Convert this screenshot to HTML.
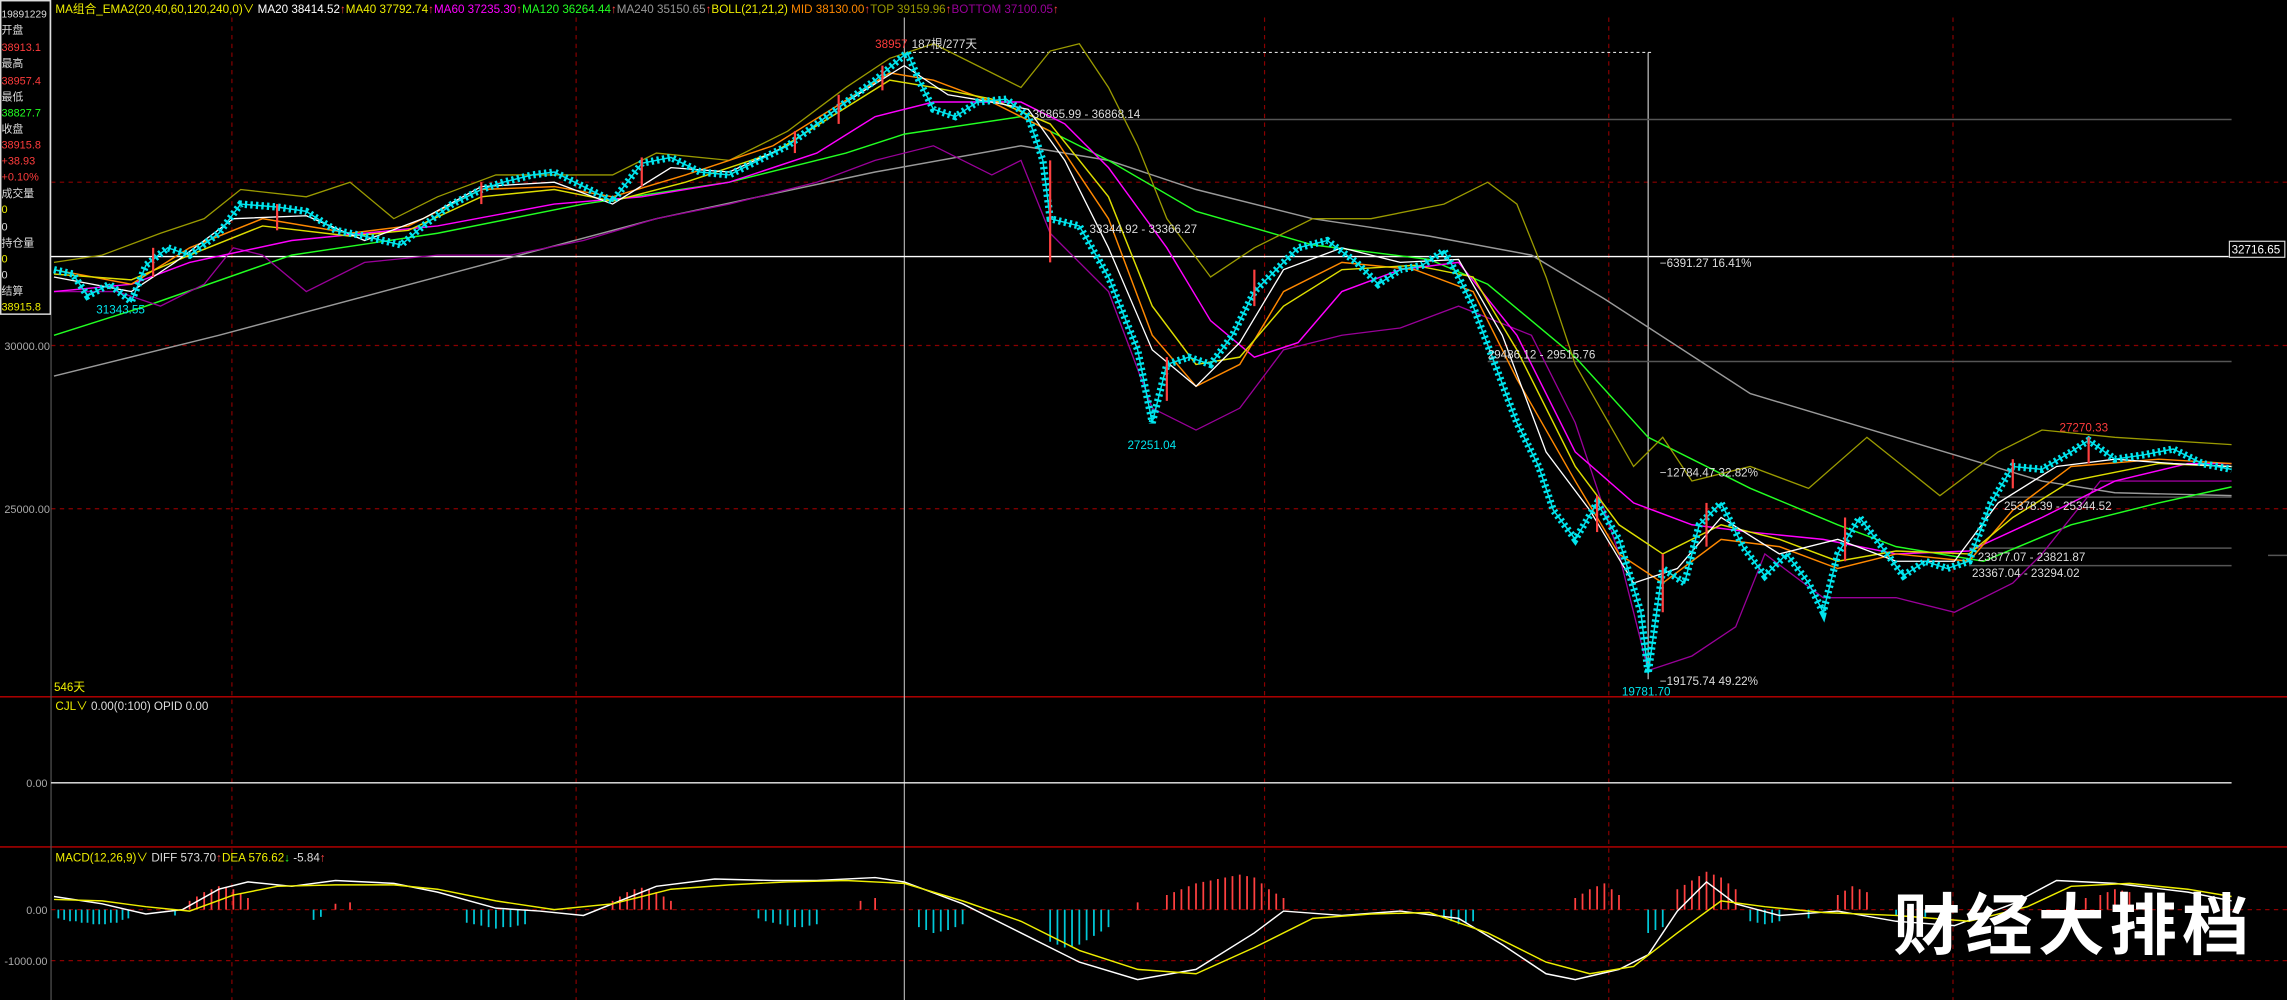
<!DOCTYPE html>
<html><head><meta charset="utf-8"><style>
html,body{margin:0;padding:0;background:#000;overflow:hidden}
svg{display:block}
text{font-family:"Liberation Sans","Noto Sans CJK SC",sans-serif}
</style></head><body>
<svg width="2287" height="1000" viewBox="0 0 1568 686" preserveAspectRatio="none" xmlns="http://www.w3.org/2000/svg">
<rect width="1568" height="686" fill="#000"/>
<g stroke="#8b0000" stroke-width="0.8" stroke-dasharray="3,3">
<line x1="159" y1="12" x2="159" y2="686"/><line x1="395" y1="12" x2="395" y2="686"/>
<line x1="867" y1="12" x2="867" y2="686"/><line x1="1103" y1="12" x2="1103" y2="686"/><line x1="1339" y1="12" x2="1339" y2="686"/>
<line x1="35" y1="125" x2="1568" y2="125"/><line x1="35" y1="237" x2="1568" y2="237"/><line x1="35" y1="349" x2="1568" y2="349"/>
<line x1="35" y1="624" x2="1568" y2="624"/><line x1="35" y1="659" x2="1568" y2="659"/>
</g>
<line x1="0" y1="478" x2="1568" y2="478" stroke="#c00000" stroke-width="1"/>
<line x1="0" y1="581" x2="1568" y2="581" stroke="#c00000" stroke-width="1"/>
<line x1="35" y1="0" x2="35" y2="686" stroke="#555" stroke-width="0.8"/>
<rect x="0.5" y="0.5" width="34" height="215" fill="none" stroke="#ddd" stroke-width="1"/>
<line x1="620" y1="12" x2="620" y2="686" stroke="#ccc" stroke-width="0.7"/>
<line x1="35" y1="176" x2="1528" y2="176" stroke="#fff" stroke-width="1"/>
<line x1="1130" y1="36" x2="1130" y2="466" stroke="#ccc" stroke-width="0.8"/>
<line x1="622" y1="36" x2="1132" y2="36" stroke="#ddd" stroke-width="0.8" stroke-dasharray="2,2"/>
<g stroke="#555" stroke-width="1">
<line x1="705" y1="82" x2="1530" y2="82"/><line x1="1020" y1="248" x2="1530" y2="248"/>
<line x1="1370" y1="341" x2="1530" y2="341"/><line x1="1350" y1="376" x2="1530" y2="376"/><line x1="1350" y1="388" x2="1530" y2="388"/>
<line x1="1555" y1="381" x2="1568" y2="381"/>
</g>
<line x1="35" y1="537" x2="1530" y2="537" stroke="#eee" stroke-width="1"/>
<polyline fill="none" stroke="#999" stroke-width="1" points="37,258 150,230 300,190 450,150 600,118 700,100 760,110 820,130 900,150 980,162 1050,175 1100,205 1200,270 1300,300 1400,330 1450,338 1530,340"/>
<polyline fill="none" stroke="#2f2" stroke-width="1" points="37,230 100,210 200,175 300,160 400,140 500,125 580,105 620,92 700,80 760,110 820,145 900,168 980,178 1020,195 1080,245 1130,300 1200,335 1260,360 1300,375 1360,385 1420,360 1480,345 1530,334"/>
<polyline fill="none" stroke="#9a9a00" stroke-width="0.9" points="37,180 70,175 110,160 140,150 165,130 210,135 240,125 270,150 300,135 340,120 380,120 420,120 450,105 500,110 540,90 580,60 610,40 640,30 680,50 700,60 720,35 740,30 760,60 780,100 800,150 830,190 860,170 900,150 940,150 990,140 1020,125 1040,140 1060,190 1080,250 1120,320 1140,300 1160,330 1200,320 1240,335 1280,300 1330,340 1370,310 1400,295 1450,300 1530,305"/>
<polyline fill="none" stroke="#990099" stroke-width="0.9" points="37,200 80,200 110,210 140,195 160,170 180,175 210,200 250,180 300,175 350,175 400,165 450,150 500,140 560,125 600,110 640,100 680,120 700,110 720,160 760,200 790,280 820,295 850,280 880,240 920,230 960,225 1000,210 1050,230 1080,290 1110,380 1130,460 1160,450 1190,430 1210,380 1250,410 1300,410 1340,420 1380,400 1400,380 1440,330 1490,330 1530,330"/>
<polyline fill="none" stroke="#f0f" stroke-width="1" points="37,200 90,195 130,180 200,165 250,160 300,155 380,140 440,135 500,125 560,105 600,80 640,70 700,70 730,85 760,115 800,170 830,220 860,245 890,235 920,200 960,185 1000,180 1040,230 1080,310 1120,345 1160,360 1200,365 1250,370 1300,380 1350,378 1400,355 1450,330 1500,318 1530,318"/>
<polyline fill="none" stroke="#f80" stroke-width="1" points="37,185 90,195 130,170 180,150 240,160 280,155 330,130 380,128 420,135 470,120 530,100 570,75 610,50 640,55 680,70 720,90 760,150 790,230 820,265 850,250 880,200 920,180 970,185 1010,200 1040,260 1080,330 1110,380 1140,400 1180,370 1220,375 1260,390 1300,380 1350,385 1380,350 1420,320 1480,315 1530,318"/>
<polyline fill="none" stroke="#dd0" stroke-width="1" points="37,188 90,192 130,175 180,155 240,162 280,158 330,135 380,130 420,138 470,125 530,105 570,80 610,55 640,60 680,68 720,85 760,135 790,210 820,250 850,245 880,210 920,185 970,182 1010,190 1040,240 1080,320 1110,360 1140,380 1180,360 1220,370 1260,385 1300,378 1350,380 1380,355 1420,330 1480,318 1530,320"/>
<polyline fill="none" stroke="#fff" stroke-width="0.9" points="37,190 90,200 120,180 160,150 210,148 250,165 290,150 330,128 380,125 420,140 460,115 500,118 540,100 580,70 620,45 650,65 680,70 705,75 730,110 760,170 790,240 820,265 850,235 880,185 920,170 960,180 1000,178 1030,230 1060,310 1090,350 1120,400 1150,390 1180,355 1220,380 1260,370 1300,385 1340,385 1370,345 1410,320 1450,315 1490,318 1530,320"/>
<g fill="none" stroke="#00e5ee">
<polyline stroke-width="1" points="37,185 50,188 60,203 75,195 90,207 100,182 115,170 130,175 150,160 165,140 190,142 210,145 230,158 250,162 275,168 290,155 310,140 330,130 345,125 365,120 380,118 400,128 420,138 440,112 460,108 480,118 500,120 520,110 540,100 560,85 580,70 600,55 622,36 630,55 640,75 655,80 670,70 690,68 705,80 715,110 720,150 740,155 760,190 780,240 790,290 800,250 815,245 830,250 845,230 860,200 875,185 890,170 910,165 930,180 945,195 960,185 975,182 990,172 1000,190 1010,210 1025,250 1040,290 1055,320 1065,350 1080,370 1095,345 1110,370 1125,420 1130,462 1140,390 1155,400 1165,360 1180,345 1195,375 1210,395 1225,380 1240,400 1250,420 1260,380 1275,355 1290,375 1305,395 1320,385 1335,390 1350,385 1365,345 1380,320 1400,322 1420,310 1432,302 1450,315 1470,312 1490,308 1510,318 1530,322"/>
<polyline stroke-width="5" stroke-dasharray="1.6,2.2" points="37,185 50,188 60,203 75,195 90,207 100,182 115,170 130,175 150,160 165,140 190,142 210,145 230,158 250,162 275,168 290,155 310,140 330,130 345,125 365,120 380,118 400,128 420,138 440,112 460,108 480,118 500,120 520,110 540,100 560,85 580,70 600,55 622,36 630,55 640,75 655,80 670,70 690,68 705,80 715,110 720,150 740,155 760,190 780,240 790,290 800,250 815,245 830,250 845,230 860,200 875,185 890,170 910,165 930,180 945,195 960,185 975,182 990,172 1000,190 1010,210 1025,250 1040,290 1055,320 1065,350 1080,370 1095,345 1110,370 1125,420 1130,462 1140,390 1155,400 1165,360 1180,345 1195,375 1210,395 1225,380 1240,400 1250,420 1260,380 1275,355 1290,375 1305,395 1320,385 1335,390 1350,385 1365,345 1380,320 1400,322 1420,310 1432,302 1450,315 1470,312 1490,308 1510,318 1530,322"/>
</g>
<g stroke="#ff4040" stroke-width="1.5">
<line x1="105" y1="170" x2="105" y2="190"/><line x1="190" y1="140" x2="190" y2="158"/><line x1="330" y1="125" x2="330" y2="140"/><line x1="440" y1="108" x2="440" y2="128"/>
<line x1="545" y1="90" x2="545" y2="105"/><line x1="575" y1="65" x2="575" y2="85"/><line x1="605" y1="45" x2="605" y2="62"/><line x1="720" y1="110" x2="720" y2="180"/>
<line x1="800" y1="245" x2="800" y2="275"/><line x1="860" y1="185" x2="860" y2="210"/><line x1="1095" y1="340" x2="1095" y2="365"/><line x1="1140" y1="380" x2="1140" y2="420"/>
<line x1="1170" y1="345" x2="1170" y2="375"/><line x1="1265" y1="355" x2="1265" y2="385"/><line x1="1380" y1="315" x2="1380" y2="335"/><line x1="1432" y1="300" x2="1432" y2="318"/>
</g>
<g stroke="#00c8d8" stroke-width="1.2">
<path d="M40 624v6M44 624v7M48 624v8M52 624v8M56 624v9M60 624v9M64 624v10M68 624v10M72 624v10M76 624v9M80 624v9M84 624v7M88 624v6M120 624v4M215 624v7M220 624v5M320 624v9M325 624v10M330 624v11M335 624v12M340 624v13M345 624v12M350 624v12M355 624v11M360 624v10M520 624v6M525 624v8M530 624v9M535 624v10M540 624v11M545 624v12M550 624v12M555 624v11M560 624v10M630 624v12M635 624v14M640 624v16M645 624v15M650 624v14M655 624v12M660 624v10M720 624v22M725 624v24M730 624v26M735 624v25M740 624v24M745 624v21M750 624v18M755 624v15M760 624v12M990 624v6M995 624v8M1000 624v10M1005 624v9M1010 624v8M1130 624v16M1135 624v14M1140 624v12M1200 624v8M1205 624v9M1210 624v10M1215 624v9M1220 624v8M1240 624v6M1300 624v4M1320 624v5"/>
</g>
<g stroke="#ff4040" stroke-width="1.2">
<path d="M130 624v-6M135 624v-9M140 624v-12M145 624v-14M150 624v-16M155 624v-15M160 624v-14M165 624v-11M170 624v-8M230 624v-4M240 624v-5M420 624v-6M425 624v-9M430 624v-12M435 624v-14M440 624v-15M445 624v-14M450 624v-12M455 624v-9M460 624v-6M590 624v-6M600 624v-8M780 624v-5M800 624v-10M805 624v-12M810 624v-14M815 624v-16M820 624v-18M825 624v-19M830 624v-20M835 624v-21M840 624v-22M845 624v-23M850 624v-24M855 624v-23M860 624v-22M865 624v-18M870 624v-14M875 624v-11M880 624v-8M1080 624v-8M1085 624v-11M1090 624v-14M1095 624v-16M1100 624v-18M1105 624v-14M1110 624v-10M1150 624v-14M1155 624v-17M1160 624v-20M1165 624v-23M1170 624v-26M1175 624v-24M1180 624v-22M1185 624v-18M1190 624v-14M1260 624v-10M1265 624v-13M1270 624v-16M1275 624v-14M1280 624v-12M1420 624v-6M1430 624v-8M1440 624v-10M1445 624v-12M1450 624v-14M1455 624v-13M1460 624v-12"/>
</g>
<polyline fill="none" stroke="#fff" stroke-width="1" points="37,615 70,620 100,627 125,624 150,610 170,605 200,608 230,604 270,606 300,612 340,623 370,625 400,628 450,608 490,603 530,604 560,604 600,602 620,605 660,620 700,640 740,660 780,672 820,665 860,640 880,625 920,628 960,625 1000,630 1030,648 1060,668 1080,672 1110,665 1130,655 1150,625 1170,605 1190,620 1220,628 1260,625 1300,632 1340,635 1380,620 1410,604 1450,606 1500,612 1530,618"/>
<polyline fill="none" stroke="#ee0" stroke-width="1" points="37,617 70,618 100,622 130,625 160,614 190,608 230,607 270,607 300,610 340,618 380,624 420,620 460,610 500,607 540,605 580,604 620,606 660,618 700,632 740,652 780,665 820,668 860,650 900,630 940,627 980,626 1020,640 1060,660 1090,668 1120,663 1150,640 1180,618 1210,622 1250,626 1300,628 1350,632 1390,622 1420,608 1460,606 1500,610 1530,615"/>
<g font-size="7.5">
<text x="1" y="12" fill="#ddd" font-size="7">19891229</text>
<text x="1" y="23" fill="#ddd">开盘</text><text x="1" y="35" fill="#ff3c3c">38913.1</text>
<text x="1" y="46" fill="#ddd">最高</text><text x="1" y="58" fill="#ff3c3c">38957.4</text>
<text x="1" y="69" fill="#ddd">最低</text><text x="1" y="80" fill="#2f2">38827.7</text>
<text x="1" y="91" fill="#ddd">收盘</text><text x="1" y="102" fill="#ff3c3c">38915.8</text>
<text x="1" y="113" fill="#ff3c3c">+38.93</text><text x="1" y="124" fill="#ff3c3c">+0.10%</text>
<text x="1" y="135" fill="#ddd">成交量</text><text x="1" y="146" fill="#ee0">0</text>
<text x="1" y="158" fill="#ddd">0</text><text x="1" y="169" fill="#ddd">持仓量</text>
<text x="1" y="180" fill="#ee0">0</text><text x="1" y="191" fill="#ddd">0</text>
<text x="1" y="202" fill="#ddd">结算</text><text x="1" y="213" fill="#ee0">38915.8</text>
</g>
<g font-size="7.5" fill="#aaa">
<text x="3" y="240">30000.00</text><text x="3" y="352">25000.00</text>
<text x="18" y="540">0.00</text><text x="18" y="627">0.00</text><text x="3" y="662">-1000.00</text>
</g>
<text x="38" y="9" font-size="8"><tspan fill="#ee0">MA组合_EMA2(20,40,60,120,240,0)∨</tspan><tspan fill="#fff">  MA20 38414.52</tspan><tspan fill="#f44">↑</tspan><tspan fill="#ee0">MA40 37792.74</tspan><tspan fill="#f44">↑</tspan><tspan fill="#f0f">MA60 37235.30</tspan><tspan fill="#f44">↑</tspan><tspan fill="#2f2">MA120 36264.44</tspan><tspan fill="#f44">↑</tspan><tspan fill="#999">MA240 35150.65</tspan><tspan fill="#f44">↑</tspan><tspan fill="#ee0">BOLL(21,21,2)  </tspan><tspan fill="#f80">MID 38130.00</tspan><tspan fill="#f44">↑</tspan><tspan fill="#9a9a00">TOP 39159.96</tspan><tspan fill="#f44">↑</tspan><tspan fill="#909">BOTTOM 37100.05</tspan><tspan fill="#f44">↑</tspan></text>
<g font-size="8">
<text x="600" y="33" fill="#ff3c3c">38957</text><text x="625" y="33" fill="#ddd">187根/277天</text>
<text x="708" y="81" fill="#ddd">36865.99 - 36868.14</text>
<text x="747" y="160" fill="#ddd">33344.92 - 33366.27</text>
<text x="1138" y="183" fill="#ddd">−6391.27  16.41%</text>
<text x="1020" y="246" fill="#ddd">29486.12 - 29515.76</text>
<text x="1138" y="327" fill="#ddd">−12784.47  32.82%</text>
<text x="1374" y="350" fill="#ddd">25378.39 - 25344.52</text>
<text x="1356" y="385" fill="#ddd">23877.07 - 23821.87</text>
<text x="1352" y="396" fill="#ddd">23367.04 - 23294.02</text>
<text x="1138" y="470" fill="#ddd">−19175.74  49.22%</text>
<text x="1112" y="477" fill="#00e5ee">19781.70</text>
<text x="1412" y="296" fill="#ff3c3c">27270.33</text>
<text x="773" y="308" fill="#00e5ee">27251.04</text>
<text x="66" y="215" fill="#00e5ee">31343.55</text>
<text x="37" y="474" fill="#ee0">546天</text>
<text x="38" y="487"><tspan fill="#ee0">CJL∨</tspan><tspan fill="#ddd">  0.00(0:100)  OPID 0.00</tspan></text>
<text x="38" y="591"><tspan fill="#ee0">MACD(12,26,9)∨</tspan><tspan fill="#ddd">  DIFF 573.70</tspan><tspan fill="#f44">↑</tspan><tspan fill="#ee0">DEA 576.62</tspan><tspan fill="#2f2">↓</tspan><tspan fill="#ddd"> -5.84</tspan><tspan fill="#f44">↑</tspan></text>
</g>
<rect x="1528.5" y="165.5" width="38" height="11" fill="#000" stroke="#ddd" stroke-width="0.8"/>
<text x="1530" y="174" font-size="8" fill="#fff">32716.65</text>
<text x="1298" y="651" font-size="46" font-weight="bold" fill="#fff" font-family="'Noto Sans CJK SC',sans-serif" textLength="244">财经大排档</text>
</svg>
</body></html>
